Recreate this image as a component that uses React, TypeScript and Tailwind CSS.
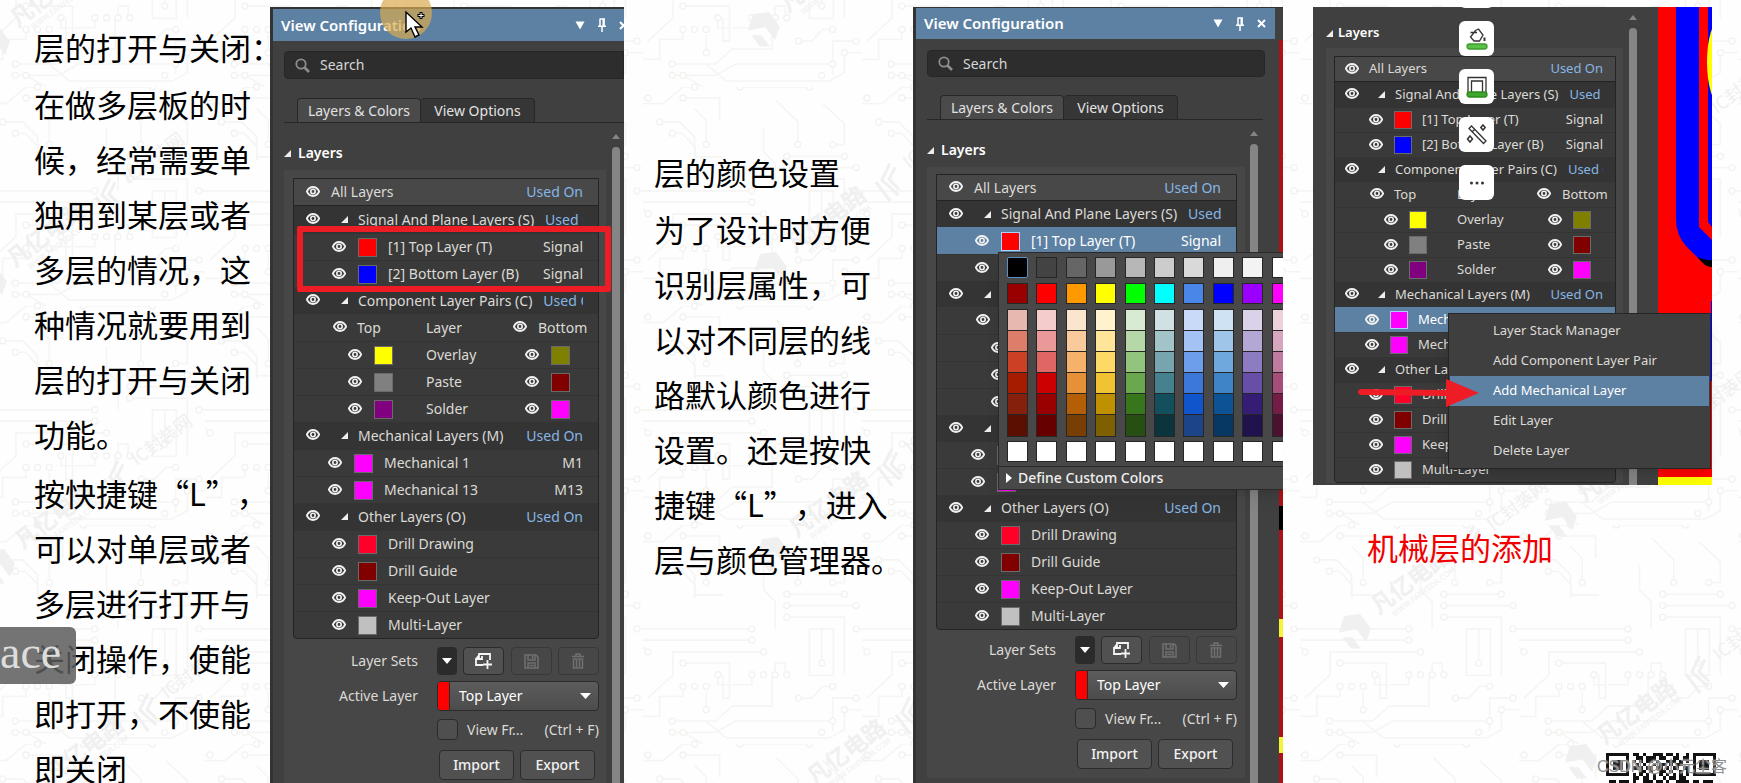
import React from 'react';
import clsx from 'clsx';

type Size = 'large' | 'medium' | 'small';

interface PairRow {
  name: string;
  top: string;
  bottom: string;
}

interface LayerItem {
  name: string;
  color: string;
  note?: string;
  mech?: boolean;
}

const signalLayers: LayerItem[] = [
  { name: '[1] Top Layer (T)', color: 'bg-[#ff0000]', note: 'Signal' },
  { name: '[2] Bottom Layer (B)', color: 'bg-[#0000ff]', note: 'Signal' },
];

const pairs: PairRow[] = [
  { name: 'Overlay', top: 'bg-[#ffff00]', bottom: 'bg-[#808000]' },
  { name: 'Paste', top: 'bg-[#808080]', bottom: 'bg-[#800000]' },
  { name: 'Solder', top: 'bg-[#800080]', bottom: 'bg-[#ff00ff]' },
];

const mechLayers: LayerItem[] = [
  { name: 'Mechanical 1', color: 'bg-[#ff00ff]', note: 'M1', mech: true },
  { name: 'Mechanical 13', color: 'bg-[#ff00ff]', note: 'M13', mech: true },
];

const otherLayers: LayerItem[] = [
  { name: 'Drill Drawing', color: 'bg-[#ff0028]' },
  { name: 'Drill Guide', color: 'bg-[#800000]' },
  { name: 'Keep-Out Layer', color: 'bg-[#ff00ff]' },
  { name: 'Multi-Layer', color: 'bg-[#c0c0c0]' },
];

const paletteBase = [
  ['bg-[#000000]', 'bg-[#434343]', 'bg-[#666666]', 'bg-[#999999]', 'bg-[#b7b7b7]', 'bg-[#cccccc]', 'bg-[#d9d9d9]', 'bg-[#efefef]', 'bg-[#f3f3f3]', 'bg-white'],
  ['bg-[#980000]', 'bg-[#ff0000]', 'bg-[#ff9900]', 'bg-[#ffff00]', 'bg-[#00ff00]', 'bg-[#00ffff]', 'bg-[#4a86e8]', 'bg-[#0000ff]', 'bg-[#9900ff]', 'bg-[#ff00ff]'],
];

const paletteShades = [
  ['bg-[#e6b8af]', 'bg-[#f4cccc]', 'bg-[#fce5cd]', 'bg-[#fff2cc]', 'bg-[#d9ead3]', 'bg-[#d0e0e3]', 'bg-[#c9daf8]', 'bg-[#cfe2f3]', 'bg-[#d9d2e9]', 'bg-[#ead1dc]'],
  ['bg-[#dd7e6b]', 'bg-[#ea9999]', 'bg-[#f9cb9c]', 'bg-[#ffe599]', 'bg-[#b6d7a8]', 'bg-[#a2c4c9]', 'bg-[#a4c2f4]', 'bg-[#9fc5e8]', 'bg-[#b4a7d6]', 'bg-[#d5a6bd]'],
  ['bg-[#cc4125]', 'bg-[#e06666]', 'bg-[#f6b26b]', 'bg-[#ffd966]', 'bg-[#93c47d]', 'bg-[#76a5af]', 'bg-[#6d9eeb]', 'bg-[#6fa8dc]', 'bg-[#8e7cc3]', 'bg-[#c27ba0]'],
  ['bg-[#a61c00]', 'bg-[#cc0000]', 'bg-[#e69138]', 'bg-[#f1c232]', 'bg-[#6aa84f]', 'bg-[#45818e]', 'bg-[#3c78d8]', 'bg-[#3d85c6]', 'bg-[#674ea7]', 'bg-[#a64d79]'],
  ['bg-[#85200c]', 'bg-[#990000]', 'bg-[#b45f06]', 'bg-[#bf9000]', 'bg-[#38761d]', 'bg-[#134f5c]', 'bg-[#1155cc]', 'bg-[#0b5394]', 'bg-[#351c75]', 'bg-[#741b47]'],
  ['bg-[#5b0f00]', 'bg-[#660000]', 'bg-[#783f04]', 'bg-[#7f6000]', 'bg-[#274e13]', 'bg-[#0c343d]', 'bg-[#1c4587]', 'bg-[#073763]', 'bg-[#20124d]', 'bg-[#4c1130]'],
];

// Column widths of the layer list; the small list is the scaled-down one.
const wide = {
  text: 'text-sm',
  header: 'pl-[12px]',
  allGap: 'ml-[11px]',
  arrow: 'ml-[21px]',
  item: 'pl-[38px]',
  mech: 'pl-[34px]',
  pairHead: 'pl-[39px]',
  pair: 'pl-[54px]',
  swatch: 'w-[19px] h-[19px]',
  swatchGap: 'ml-[12px]',
  nameGap: 'ml-[11px]',
  topCol: 'w-[69px]',
  layerCol: 'w-[87px]',
  pairName: 'ml-[33px] w-[99px]',
  right: 'pr-[15px]',
};

const styles = {
  large: { ...wide, all: 'h-[27px]', headRow: 'h-[27px]', row: 'h-[27px]' },
  medium: { ...wide, all: 'h-[26px]', headRow: 'h-[26px]', row: 'h-[27px]' },
  small: {
    text: 'text-[13px]',
    header: 'pl-[10px]',
    allGap: 'ml-[10px]',
    arrow: 'ml-[19px]',
    item: 'pl-[34px]',
    mech: 'pl-[30px]',
    pairHead: 'pl-[35px]',
    pair: 'pl-[49px]',
    swatch: 'w-[18px] h-[18px]',
    swatchGap: 'ml-[11px]',
    nameGap: 'ml-[10px]',
    topCol: 'w-[63px]',
    layerCol: 'w-[80px]',
    pairName: 'ml-[30px] w-[91px]',
    right: 'pr-[12px]',
    all: 'h-[25px]',
    headRow: 'h-[25px]',
    row: 'h-[25px]',
  },
};

function Eye() {
  return (
    <button className="shrink-0 mb-0.5" aria-label="Toggle visibility">
      <svg width="14" height="11" viewBox="0 0 14 11">
        <path d="M0.8 5.5C2.3 2.4 4.5 1 7 1s4.700 1.400 6.200 4.500C11.700 8.600 9.500 10 7 10S2.300 8.600 0.800 5.500z" fill="none" stroke="#f0f0f0" strokeWidth="1.9" />
        <circle cx="7" cy="5.500" r="2.200" fill="none" stroke="#f0f0f0" strokeWidth="1.600" />
      </svg>
    </button>
  );
}

function Corner({ className }: { className?: string }) {
  return (
    <svg width="7" height="7" viewBox="0 0 7 7" className={clsx('shrink-0', className)}>
      <path d="M7 0v7H0z" fill="#ededed" />
    </svg>
  );
}

function Swatch({ color, size, active }: { color: string; size: Size; active?: boolean }) {
  return (
    <button
      aria-label="Layer color"
      className={clsx('shrink-0 border', active ? 'border-[#a9d4ff]' : 'border-[#6a6a6a]', styles[size].swatch, color)}
    />
  );
}

function GroupHeader({ name, size }: { name: string; size: Size }) {
  const s = styles[size];
  return (
    <li className={clsx('flex items-center bg-[#343434] whitespace-nowrap', s.headRow, s.header, s.right)}>
      <Eye />
      <Corner className={s.arrow} />
      <span className="ml-[10px] shrink-0">{name}</span>
      <a href="#used" className="ml-auto pl-[11px] min-w-0 overflow-hidden text-[#86b6e6]">Used On</a>
    </li>
  );
}

function ItemRow({ item, size, active }: { item: LayerItem; size: Size; active?: boolean }) {
  const s = styles[size];
  return (
    <li
      className={clsx(
        'flex items-center border-t whitespace-nowrap',
        active ? 'bg-[#5d81a3] border-[#5d81a3] text-white' : 'border-[#343434]',
        s.row,
        item.mech ? s.mech : s.item,
        s.right
      )}
    >
      <Eye />
      <span className={clsx('flex', s.swatchGap)}>
        <Swatch color={item.color} size={size} active={active} />
      </span>
      <span className={s.nameGap}>{item.name}</span>
      <span className="ml-auto">{item.note}</span>
    </li>
  );
}

function LayerList({ size, selected }: { size: Size; selected?: string }) {
  const s = styles[size];
  return (
    <ul className={clsx('border border-[#242424] rounded-b-sm bg-[#3a3a3a] text-[#dcdad6]', s.text)}>
      <li className={clsx('flex items-center bg-[#484848] border-b border-[#242424]', s.all, s.header, s.right)}>
        <Eye />
        <span className={s.allGap}>All Layers</span>
        <a href="#used" className="ml-auto text-[#86b6e6]">Used On</a>
      </li>
      <GroupHeader name="Signal And Plane Layers (S)" size={size} />
      {signalLayers.map((l) => (
        <ItemRow key={l.name} item={l} size={size} active={selected === l.name} />
      ))}
      <GroupHeader name="Component Layer Pairs (C)" size={size} />
      <li className={clsx('flex items-center', s.row, s.pairHead)}>
        <Eye />
        <span className={clsx('ml-[10px]', s.topCol)}>Top</span>
        <span className={s.layerCol}>Layer</span>
        <Eye />
        <span className="ml-[11px]">Bottom</span>
      </li>
      {pairs.map((p) => (
        <li key={p.name} className={clsx('flex items-center border-t border-[#343434]', s.row, s.pair)}>
          <Eye />
          <span className={clsx('flex', s.swatchGap)}>
            <Swatch color={p.top} size={size} />
          </span>
          <span className={s.pairName}>{p.name}</span>
          <Eye />
          <span className={clsx('flex', s.swatchGap)}>
            <Swatch color={p.bottom} size={size} />
          </span>
        </li>
      ))}
      <GroupHeader name="Mechanical Layers (M)" size={size} />
      {mechLayers.map((l) => (
        <ItemRow key={l.name} item={l} size={size} active={selected === l.name} />
      ))}
      <GroupHeader name="Other Layers (O)" size={size} />
      {otherLayers.map((l) => (
        <ItemRow key={l.name} item={l} size={size} />
      ))}
    </ul>
  );
}

function TitleIcons() {
  return (
    <div className="flex items-center">
      <button aria-label="Menu">
        <svg width="10" height="9" viewBox="0 0 10 9"><path d="M0.500 0.500h9L5 8.500z" fill="#fff" /></svg>
      </button>
      <button aria-label="Pin" className="ml-[12px]">
        <svg width="10" height="14" viewBox="0 0 10 14">
          <path d="M2.500 1h5.500M3 1v7M7 1v7M1 8.200h8M5 8.500V14" stroke="#fff" strokeWidth="1.500" fill="none" />
          <path d="M5.500 1h2v7h-2z" fill="#fff" />
        </svg>
      </button>
      <button aria-label="Close" className="ml-[12px]">
        <svg width="9" height="9" viewBox="0 0 9 9"><path d="M1 1l7 7M8 1L1 8" stroke="#fff" strokeWidth="2" /></svg>
      </button>
    </div>
  );
}

function SetControls({ id }: { id: string }) {
  return (
    <div className="flex flex-col items-end text-sm text-[#dcdad6]">
      <div className={clsx('flex items-center', id === 'large' ? 'mt-2' : 'mt-1.5')}>
        <span className="mr-[19px]">Layer Sets</span>
        <div className="flex w-[162px] justify-between">
          <button aria-label="Choose set" className="flex h-7 w-5 items-center justify-center rounded bg-[#2b2b2b]">
            <svg width="10" height="6" viewBox="0 0 10 6"><path d="M0 0h10L5 6z" fill="#fff" /></svg>
          </button>
          <button aria-label="Add set" className="flex h-7 w-[41px] items-center justify-center rounded border border-[#2b2b2b] bg-[#515151]">
            <svg width="20" height="18" viewBox="0 0 20 18" fill="none" stroke="#f4f4f4" strokeWidth="1.800">
              <path d="M9 13H2V7h3V2h11v6M5 7h3V4M2 7l4-5M13.500 8v9M9 12.500h9" />
            </svg>
          </button>
          <button aria-label="Save set" className="flex h-7 w-[41px] items-center justify-center rounded border border-[#383838]">
            <svg width="15" height="15" viewBox="0 0 15 15" fill="none" stroke="#707070" strokeWidth="1.500">
              <path d="M1 1h11l2 2v11H1zM4 1v5h7V1M4 14V9h7v5M5.500 11.500h4M8.500 2v3" />
            </svg>
          </button>
          <button aria-label="Delete set" className="flex h-7 w-[41px] items-center justify-center rounded border border-[#383838]">
            <svg width="14" height="16" viewBox="0 0 14 16" fill="none" stroke="#707070" strokeWidth="1.500">
              <path d="M1 3.500h12M5 3V1h4v2M2.500 6h9v9h-9zM5.500 7v7M8.500 7v7" />
            </svg>
          </button>
        </div>
      </div>
      <div className="mt-1.5 flex items-center">
        <label htmlFor={id + '-active'} className="mr-[19px]">Active Layer</label>
        <div className="flex h-[30px] w-[162px] items-center rounded border border-[#2b2b2b] bg-linear-to-b from-[#5c5c5c] to-[#4c4c4c] overflow-hidden">
          <span className="h-full w-3 shrink-0 border-r border-[#2b2b2b] bg-[#ff0000]" />
          <select id={id + '-active'} className="h-full flex-1 appearance-none pl-[9px] text-white outline-none">
            <option>Top Layer</option>
          </select>
          <svg width="11" height="6" viewBox="0 0 11 6" className="mr-[7px]"><path d="M0 0h11L5.500 6z" fill="#fff" /></svg>
        </div>
      </div>
      <label className="mt-2 flex w-[162px] items-center whitespace-nowrap">
        <input type="checkbox" className="h-[21px] w-[21px] appearance-none rounded border border-[#2b2b2b] bg-[#4f4f4f]" />
        <span className="ml-[9px]">View Fr...</span>
        <span className="ml-auto">(Ctrl + F)</span>
      </label>
      <div className="mt-[10px] mr-1 flex gap-1.5 font-medium text-[#f2f2f2]">
        <button className="h-[30px] w-[75px] rounded border border-[#2b2b2b] bg-[#515151]">Import</button>
        <button className="h-[30px] w-[75px] rounded border border-[#2b2b2b] bg-[#515151]">Export</button>
      </div>
    </div>
  );
}

function ScrollBar({ className }: { className?: string }) {
  return (
    <div className={clsx('flex w-2 flex-col items-center', className)}>
      <svg width="8" height="5" viewBox="0 0 8 5" className="shrink-0"><path d="M0 5h8L4 0z" fill="#858585" /></svg>
      <span className="mt-2 w-2 flex-1 rounded-t bg-[#858585]" />
    </div>
  );
}

function ColorPopup() {
  return (
    <div className="absolute left-[85px] top-[245px] w-[310px] border border-[#2a2a2a] bg-[#484848] shadow-lg">
      <div className="w-[302px] pl-2 pt-1">
        {paletteBase.map((row, i) => (
          <div key={i} className="grid grid-cols-10 mb-[5px]">
            {row.map((c, j) => (
              <button
                key={c}
                aria-label="Pick color"
                className={clsx('h-[21px] w-[21px] border', i + j === 0 ? 'border-[#5d8fc0] rounded-xs' : 'border-[#262626]', c)}
              />
            ))}
          </div>
        ))}
        {paletteShades.map((row, i) => (
          <div key={i} className="grid grid-cols-10">
            {row.map((c) => (
              <button
                key={c}
                aria-label="Pick shade"
                className={clsx('w-[21px] border-x border-t border-[#262626]', i === 5 ? 'h-[23px] border-b' : 'h-[21px]', c)}
              />
            ))}
          </div>
        ))}
        <div className="mt-1 grid grid-cols-10">
          {paletteBase[0].map((c) => (
            <button key={c} aria-label="Custom color" className="h-[21px] w-[21px] border border-[#262626] bg-white" />
          ))}
        </div>
      </div>
      <button className="mt-1 flex h-[23px] w-full items-center border-t border-[#2a2a2a] pl-[7px] text-sm font-medium text-[#f0f0f0]">
        <svg width="6" height="10" viewBox="0 0 6 10"><path d="M0 0v10l6-5z" fill="#fff" /></svg>
        <span className="ml-[6px]">Define Custom Colors</span>
      </button>
    </div>
  );
}

function ViewConfiguration({ size, selected, children }: { size: 'large' | 'medium'; selected?: string; children?: React.ReactNode }) {
  const large = size === 'large';
  return (
    <section
      className={clsx(
        'relative flex min-w-0 flex-col overflow-hidden border-l-[3px] border-[#333333] bg-[#404040]',
        large ? 'border-t-2' : 'border-t'
      )}
    >
      <header
        className={clsx(
          'flex shrink-0 items-center justify-between bg-[#5d81a3] pl-2 text-white',
          large ? 'h-8 -mr-1 pr-0' : 'h-[31px] mr-2 pr-[9px]'
        )}
      >
        <h2 className="text-[15px] font-semibold">View Configuration</h2>
        <TitleIcons />
      </header>
      <label
        className={clsx(
          'flex shrink-0 items-center border border-[#272727] bg-[#2d2d2d] ml-[11px]',
          large ? 'mt-[10px] h-7 rounded-l' : 'mt-[11px] mr-[18px] h-[27px] rounded'
        )}
      >
        <svg width="15" height="15" viewBox="0 0 15 15" className="ml-[10px]" fill="none" stroke="#8c8c8c">
          <circle cx="6" cy="6" r="4.700" strokeWidth="1.800" />
          <path d="M9.500 9.500l4.500 4.500" strokeWidth="2.600" />
        </svg>
        <input
          type="text"
          aria-label="Search"
          placeholder="Search"
          className="ml-[10px] min-w-0 flex-1 text-sm text-white outline-none placeholder:text-[#d6d6d6]"
        />
      </label>
      <div
        className={clsx(
          'flex shrink-0 border-b border-[#272727] ml-[11px] pl-[13px] text-sm whitespace-nowrap text-[#e2e2e2]',
          large ? 'mt-[19px]' : 'mt-[18px] mr-5'
        )}
      >
        <button className="h-6 w-[124px] rounded-t border border-b-0 border-[#272727] bg-[#4a4a4a]">Layers &amp; Colors</button>
        <button className="h-6 w-[114px] rounded-t border border-b-0 border-l-0 border-[#272727] bg-[#363636]">View Options</button>
      </div>
      <div className="flex flex-1">
        <div className="ml-[11px] w-[322px] shrink-0">
          <h3 className="mt-5 flex h-5 items-center text-sm font-semibold text-white">
            <Corner />
            <span className="ml-[7px]">Layers</span>
          </h3>
          <div className={clsx('mt-[7px] bg-[#474747] pl-[9px] pb-[9px]', large ? 'h-full pr-[7px] pt-[8px]' : 'w-[318px] pr-2 pt-[7px]')}>
            <LayerList size={size} selected={selected} />
            <SetControls id={size} />
          </div>
        </div>
        <ScrollBar className={large ? 'ml-[6px] mt-[11px]' : 'ml-[1px] mt-[11px]'} />
      </div>
      {children}
    </section>
  );
}

const menuItems = ['Layer Stack Manager', 'Add Component Layer Pair', 'Add Mechanical Layer', 'Edit Layer', 'Delete Layer'];

function ContextMenu() {
  return (
    <div role="menu" className="absolute left-[135px] top-[306px] w-[263px] border border-[#262626] bg-[#3f3f3f] py-0.5 shadow-lg">
      {menuItems.map((m) => (
        <button
          key={m}
          role="menuitem"
          className={clsx(
            'mx-auto block h-[30px] w-[259px] pl-[43px] text-left text-[13px]',
            m === 'Add Mechanical Layer' ? 'bg-[#5d81a3] text-white' : 'text-[#dcdad6]'
          )}
        >
          {m}
        </button>
      ))}
    </div>
  );
}

function FloatingTools() {
  const tile = 'flex h-[35px] w-[35px] items-center justify-center rounded-md bg-white';
  return (
    <div className="absolute left-[146px] -top-[34px] flex flex-col gap-[13px]">
      <button aria-label="More tools" className={tile} />
      <button aria-label="Fill color" className={tile}>
        <svg width="22" height="22" viewBox="0 0 22 22" fill="none" stroke="#333" strokeWidth="1.300">
          <path d="M4.500 4.500h6.500M9.500 2.500l3-1.500 4.500 6-3.500 6H8L4.500 9z" />
          <path d="M18.500 9.500v3.500" strokeWidth="2" />
          <rect x="1" y="16" width="20" height="5" rx="2.500" fill="#58c247" stroke="#3f9a30" />
        </svg>
      </button>
      <button aria-label="Outline color" className={tile}>
        <svg width="22" height="22" viewBox="0 0 22 22" fill="none" stroke="#333" strokeWidth="1.300">
          <path d="M2 16V1.500h18V16M5.500 16V5h11v11" />
          <rect x="1" y="16" width="20" height="5" rx="2.500" fill="#3fa52e" stroke="#2f8a20" />
        </svg>
      </button>
      <button aria-label="Magic wand" className={tile}>
        <svg width="22" height="22" viewBox="0 0 22 22" fill="none" stroke="#333" strokeWidth="1.300">
          <path d="M3 4.500L5.500 2 20 17l-2.500 2.500zM6 8l3-3" />
          <path d="M17 1l2.200 2.500L17 6l-2.200-2.500zM4 12l2.500 3L4 18l-2.500-3z" strokeWidth="1.500" />
        </svg>
      </button>
      <button aria-label="More" className={tile}>
        <svg width="16" height="4" viewBox="0 0 16 4" fill="#333">
          <circle cx="2.500" cy="2" r="1.500" />
          <circle cx="8" cy="2" r="1.500" />
          <circle cx="13.500" cy="2" r="1.500" />
        </svg>
      </button>
    </div>
  );
}

function MechanicalPanel() {
  return (
    <section className="relative mt-[7px] flex h-[478px] bg-[#404040]">
      <div className="ml-[13px] w-[297px] shrink-0 overflow-hidden">
        <h3 className="mt-4 flex h-5 items-center text-[13px] font-semibold text-white">
          <Corner />
          <span className="ml-[5px]">Layers</span>
        </h3>
        <div className="mt-[5px] bg-[#474747] pl-2 pr-[7px] pt-2">
          <LayerList size="small" selected="Mechanical 1" />
        </div>
      </div>
      <ScrollBar className="ml-[6px] mt-2" />
      <svg className="ml-auto w-[54px] shrink-0" viewBox="0 0 54 478" preserveAspectRatio="none">
        <path d="M0 0h54v478H0z" fill="#ff0000" />
        <path d="M18 0h23v220l13 13v21H43L28 239Q18 228 18 212z" fill="#0000ff" />
        <path d="M40 250q7 4 14 3v7q-8 0-14-10z" fill="#000" />
        <path d="M50 0h4v220l-4-5z" fill="#0000ff" />
        <ellipse cx="62" cy="55" rx="13" ry="42" fill="#ffff00" />
        <path d="M0 470h54v8H0z" fill="#ffff00" />
        <path d="M53 294h1v80h-1z" fill="#0000ff" />
      </svg>
      <ContextMenu />
      <FloatingTools />
      <svg className="absolute left-[45px] top-[372px]" width="121" height="28" viewBox="0 0 121 28">
        <path d="M0 13q0-3 4-3l84 1V0l33 14-33 14V17l-84-1q-4 0-4-3z" fill="#ee1c25" />
      </svg>
    </section>
  );
}

const qrRows = [
  '111111101101001110110100101111111',
  '100000100110111011001101101000001',
  '101110101010110100111010101011101',
  '101110100101001011010110001011101',
  '101110101110110110101101101011101',
  '100000100011010011010010101000001',
  '111111101010101010101010101111111',
  '000000001101101001011011000000000',
  '011011101001110110100111101101110',
];

function Watermark({ x, y }: { x: number; y: number }) {
  return (
    <g transform={`translate(${x} ${y}) rotate(-37)`} fill="#f0f0f0">
      <path d="M-42-6l14-10 14 8v18l-12 8V2zM-42 0v14l8 6V6z" />
      <text x="0" y="4" fontSize="23" fontWeight="700">凡亿电路</text>
      <text x="12" y="15" fontSize="8">WWW.FANYEDA.COM</text>
      <path d="M108-4v24M118 20l-4-22 16-8M122 16l-2-14 12-6" stroke="#f0f0f0" strokeWidth="3" fill="none" />
      <text x="142" y="6" fontSize="18">IC封装网</text>
    </g>
  );
}

const traces =
  'M155 0H120L60 50H0M292 0h208M0 33h15M120 33H230V100M50 105H110L155 150V210H240M88 139h30l38 40v40M190 173V100L155 65M465 173V105L400 40M570 173h35V110L540 50M432 208h173M432 242h208M432 277h173V450M640 312h18M0 312h327M0 346h327M397 312V230L362 195V120M120 415h140V520H240V450M362 381H90V450L15 520M397 450v-35h30v35M537 415V312M500 312v140h72V312h-72M327 450v30h-60M467 520h40l33-35h30M640 520h-70v100M605 555v60L560 640H250L190 590M120 485v30H50v60H0M88 589h130l50-45h120v-90M88 623h130l60-34h292M120 623l60 35M15 381L0 365M225 450v30h35M190 555V500M658 555h-40';

const pads = [
  [155, 0], [155, 658], [292, 0], [500, 0], [15, 33], [120, 33], [50, 105], [88, 139], [190, 173], [465, 173], [570, 173], [432, 208],
  [605, 208], [432, 242], [640, 242], [432, 277], [640, 312], [327, 312], [327, 346], [362, 381], [15, 381], [120, 415], [225, 450],
  [327, 450], [362, 450], [397, 450], [432, 450], [537, 415], [570, 485], [120, 485], [155, 485], [190, 485], [467, 520], [640, 520],
  [605, 555], [190, 555], [88, 589], [570, 589], [88, 623], [120, 623], [537, 623],
];

function Backdrop() {
  return (
    <svg className="pointer-events-none absolute inset-0 h-full w-full font-['Noto_Sans_CJK_SC',sans-serif]" aria-hidden="true">
      <defs>
        <pattern id="board" width="219" height="219" x="1300" y="525" patternUnits="userSpaceOnUse" viewBox="0 0 658 658">
          <path d={traces} fill="none" stroke="#f5f5f4" strokeWidth="5" />
          {pads.map(([x, y]) => (
            <circle key={x + '-' + y} cx={x} cy={y} r="9" fill="#fff" stroke="#f2f2f0" strokeWidth="4" />
          ))}
        </pattern>
      </defs>
      <rect width="100%" height="100%" fill="url(#board)" />
      <Watermark x={15} y={25} />
      <Watermark x={12} y={265} />
      <Watermark x={20} y={547} />
      <Watermark x={50} y={780} />
      <Watermark x={785} y={10} />
      <Watermark x={792} y={250} />
      <Watermark x={794} y={535} />
      <Watermark x={812} y={783} />
      <Watermark x={1376} y={612} />
      <Watermark x={1602} y={742} />
      <Watermark x={1582} y={500} />
      <Watermark x={1600} y={195} />
    </svg>
  );
}

export default function App() {
  return (
    <main
      lang="zh-CN"
      className="relative grid h-screen grid-cols-[270fr_354fr_289fr_370fr_30fr_399fr_29fr] overflow-hidden bg-[#fefefe] font-['Noto_Sans','Noto_Sans_CJK_SC',sans-serif] [text-spacing-trim:space-all]"
    >
      <Backdrop />

      <article className="relative min-w-0 pl-[34px] pt-[19px] text-[31px] leading-[55px] whitespace-nowrap text-black font-['Noto_Sans_CJK_SC',sans-serif]">
        <h1>层的打开与关闭：</h1>
        <p className="mt-0.5">
          在做多层板的时<br />候，经常需要单<br />独用到某层或者<br />多层的情况，这<br />种情况就要用到<br />层的打开与关闭<br />功能。
        </p>
        <p className="mt-1">
          按快捷键“L”，<br />可以对单层或者<br />多层进行打开与<br />关闭操作，使能<br />即打开，不使能<br />即关闭
        </p>
      </article>

      <div className="relative mt-[7px] grid min-w-0">
        <ViewConfiguration size="large" />
        <span className="absolute left-[27px] top-[219px] h-[66px] w-[314px] rounded-xs border-6 border-[#ee1c25]" />
        <span className="absolute left-[110px] -top-5 h-[52px] w-[52px] rounded-full bg-[#d9a94e]/70" />
        <svg className="absolute left-[135px] top-[3px]" width="22" height="30" viewBox="0 0 22 30">
          <path d="M1 2v20l5-4 4 9 4-2-4-8h7z" fill="#fff" stroke="#000" strokeWidth="1.400" />
          <path d="M16 2v7M12.500 5.500h7" stroke="#000" strokeWidth="3" />
          <path d="M16 3v5M13.500 5.500h5" stroke="#fff" strokeWidth="1" />
        </svg>
      </div>

      <article className="relative min-w-0 pl-[30px] pt-[144px] text-[31px] leading-[55px] whitespace-nowrap text-black font-['Noto_Sans_CJK_SC',sans-serif]">
        <h2>层的颜色设置</h2>
        <p className="mt-0.5">
          为了设计时方便<br />识别层属性，可<br />以对不同层的线<br />路默认颜色进行<br />设置。还是按快<br />捷键“L”，进入<br />层与颜色管理器。
        </p>
      </article>

      <div className="relative mt-[7px] grid min-w-0">
        <ViewConfiguration size="medium" selected="[1] Top Layer (T)">
          <div className="absolute right-0 top-8 bottom-0 flex w-1 flex-col bg-[#b01116]">
            <span className="mt-[466px] h-6 bg-black" />
            <span className="mt-[89px] h-[18px] bg-[#f4f436]" />
            <span className="mt-[100px] h-4 bg-[#f4f436]" />
          </div>
        </ViewConfiguration>
        <div className="absolute inset-0 overflow-hidden">
          <ColorPopup />
        </div>
      </div>

      <div />

      <div className="relative min-w-0">
        <MechanicalPanel />
        <h2 className="ml-[54px] mt-[34px] text-[31px] leading-[55px] text-[#f00000] font-['Noto_Sans_CJK_SC',sans-serif]">机械层的添加</h2>
      </div>

      <span className="absolute left-0 top-[627px] h-[57px] w-[76px] rounded-r-md bg-[#5c5c5c]/85 text-[46px] leading-[52px] text-[#dddddd] font-['Liberation_Serif',serif]">
        ace
      </span>

      <svg className="absolute bottom-0 right-[25px]" width="110" height="30" viewBox="0 0 33 9" shapeRendering="crispEdges">
        <path d="M0 0h33v9H0z" fill="#fff" />
        {qrRows.map((r, y) =>
          r.split('').map((c, x) => (c === '1' ? <path key={x + '-' + y} d={`M${x} ${y}h1v1h-1z`} fill="#111" /> : null))
        )}
      </svg>
      <span className="absolute bottom-1 right-[14px] text-[16px] whitespace-nowrap text-[#8f8f8f] font-['Liberation_Sans','Noto_Sans_CJK_SC',sans-serif] [text-shadow:0_0_2px_white]">
        CSDN @小元尘客
      </span>
    </main>
  );
}
